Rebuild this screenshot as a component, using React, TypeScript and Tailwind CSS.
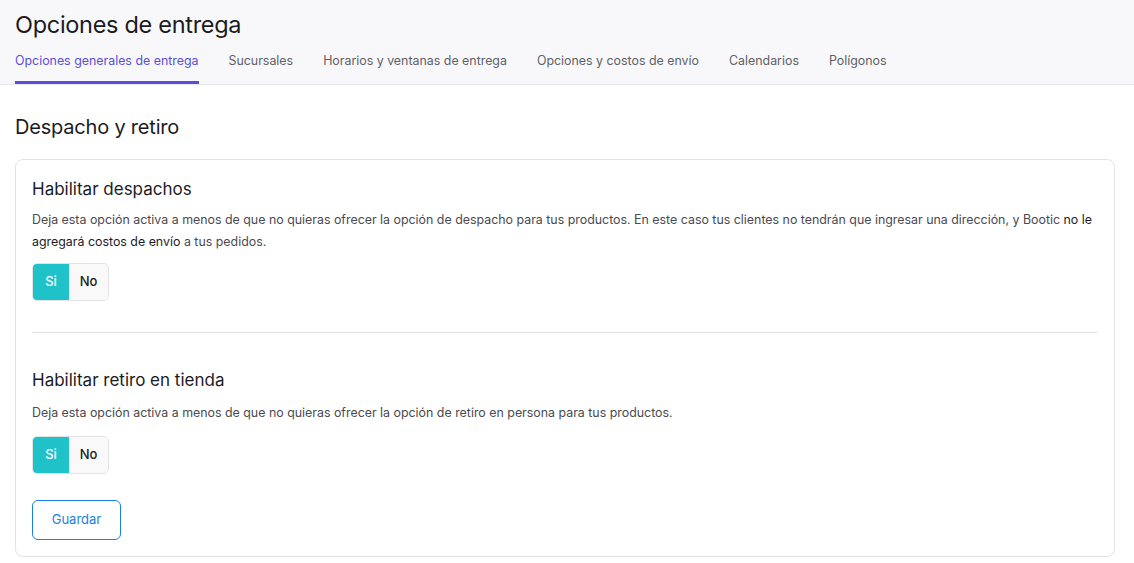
import React, { useState } from "react"

const TABS = [
  "Opciones generales de entrega",
  "Sucursales",
  "Horarios y ventanas de entrega",
  "Opciones y costos de envío",
  "Calendarios",
  "Polígonos",
]

function Toggle() {
  const [on, setOn] = useState(true)
  return (
    <div className="flex h-[38px] w-[77px] overflow-hidden rounded-[5px] border border-[#e3e3e3] text-[13px] font-medium">
      <button
        onClick={() => setOn(true)}
        className={on ? "w-[36px] bg-[#20c2ca] text-white" : "w-[36px] bg-[#f9f9f9] text-[#222]"}
      >
        Si
      </button>
      <button
        onClick={() => setOn(false)}
        className={!on ? "flex-1 bg-[#20c2ca] text-white" : "flex-1 bg-[#f9f9f9] text-[#222]"}
      >
        No
      </button>
    </div>
  )
}

export default function App() {
  const [tab, setTab] = useState(0)
  return (
    <div className="min-h-screen bg-white text-[#1a1a1a]" style={{ fontFamily: "Inter, 'Noto Sans', sans-serif" }}>
      {/* Header */}
      <header className="border-b border-[#e8e8ec] bg-[#f8f8fa] px-[15px] pt-[9px]">
        <h1 className="text-[23.5px] leading-[32px] font-normal tracking-[-0.3px] text-[#1b1b1f]">Opciones de entrega</h1>
        <nav className="mt-[8px] flex gap-[30px]">
          {TABS.map((t, i) => (
            <button
              key={t}
              onClick={() => setTab(i)}
              className={
                i === tab
                  ? "border-b-[3px] border-[#5a4fd6] pb-[10px] pt-[3px] text-[12.4px] text-[#5a4fd6]"
                  : "border-b-[3px] border-transparent pb-[10px] pt-[3px] text-[12.4px] text-[#5f5f66]"
              }
            >
              {t}
            </button>
          ))}
        </nav>
      </header>

      {/* Body */}
      <main className="pl-[15px] pr-[19px] pt-[28px] pb-[7px]">
        <h2 className="text-[20px] leading-[28px] font-normal tracking-[-0.2px] text-[#1b1b1f]">Despacho y retiro</h2>

        <section className="mt-[18px] rounded-[8px] border border-[#e3e3e3] px-[16px] pt-[17px] pb-[16px]">
          <h3 className="text-[17px] leading-[24px] text-[#1b1b1f]">Habilitar despachos</h3>
          <p className="mt-[8px] text-[12.4px] leading-[22px] text-[#4a4a4f]">
            Deja esta opción activa a menos de que no quieras ofrecer la opción de despacho para tus productos. En este caso tus clientes no tendrán que ingresar una dirección, y Bootic{" "}
            <span className="text-[#1b1b1f]">no le agregará costos de envío</span> a tus pedidos.
          </p>
          <div className="mt-[10px]">
            <Toggle />
          </div>

          <hr className="mt-[31px] border-[#e3e3e3]" />

          <h3 className="mt-[35px] text-[17px] leading-[24px] text-[#1b1b1f]">Habilitar retiro en tienda</h3>
          <p className="mt-[10px] text-[12.4px] leading-[22px] text-[#4a4a4f]">
            Deja esta opción activa a menos de que no quieras ofrecer la opción de retiro en persona para tus productos.
          </p>
          <div className="mt-[12px]">
            <Toggle />
          </div>

          <button className="mt-[26px] h-[40px] w-[89px] rounded-[6px] border border-[#1a7fe8] text-[13px] text-[#1a7fe8]">
            Guardar
          </button>
        </section>
      </main>
    </div>
  )
}
